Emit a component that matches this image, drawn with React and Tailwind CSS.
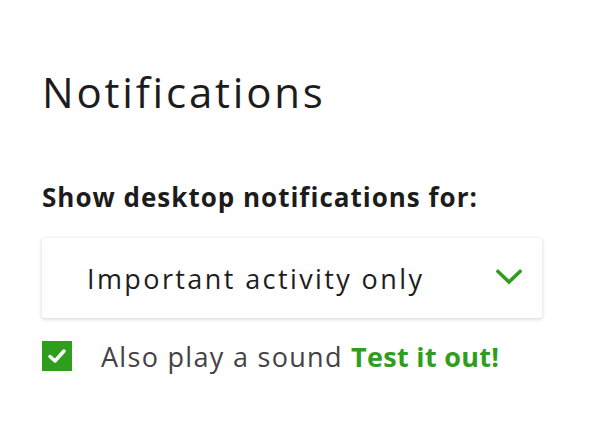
import React, { useState } from "react";

export default function App() {
    const [sound, setSound] = useState(true);

    return (
        <div
            className="h-[446px] overflow-hidden bg-white pl-[42px] pr-[50px] pt-[64px] text-[#1d1c1d]"
            style={{ fontFamily: '"Open Sans", "Liberation Sans", sans-serif' }}
        >
            <h1 className="text-[42px] leading-[56px] tracking-[2.8px]">Notifications</h1>

            <p className="mt-[61px] text-[26px] font-bold leading-[32px] tracking-[1px]">
                Show desktop notifications for:
            </p>

            <div className="mt-[25px] flex h-[80px] w-[500px] items-center justify-between rounded-[3px] bg-white pl-[45px] pr-[20px] shadow-[0_1px_4px_rgba(0,0,0,0.18)]">
                <span className="text-[27px] leading-none tracking-[2.4px]">Important activity only</span>
                <svg className="mb-[2px]" width="26" height="16" viewBox="0 0 26 16" fill="none">
                    <path d="M2 2.5 L13 13 L24 2.5" stroke="#2f9e1c" strokeWidth="3.5" strokeLinecap="square" />
                </svg>
            </div>

            <label className="mt-[23px] flex items-center">
                <button
                    onClick={() => setSound(!sound)}
                    className="flex h-[30px] w-[30px] items-center justify-center bg-[#2f9e1c]"
                >
                    {sound && (
                        <svg width="20" height="16" viewBox="0 0 20 16" fill="none">
                            <path d="M3 8.5 L8 13 L17 3" stroke="white" strokeWidth="3.5" strokeLinecap="round" strokeLinejoin="round" />
                        </svg>
                    )}
                </button>
                <span className="ml-[29px] text-[27px] leading-none tracking-[1.3px] text-[#454245]">
                    Also play a sound{" "}
                    <span className="font-bold tracking-[0.3px] text-[#2f9e1c]">Test it out!</span>
                </span>
            </label>

            <p className="mt-[70px] text-[26px] font-bold leading-[32px] tracking-[1px]">
                Important Announcements for
            </p>
        </div>
    );
}
